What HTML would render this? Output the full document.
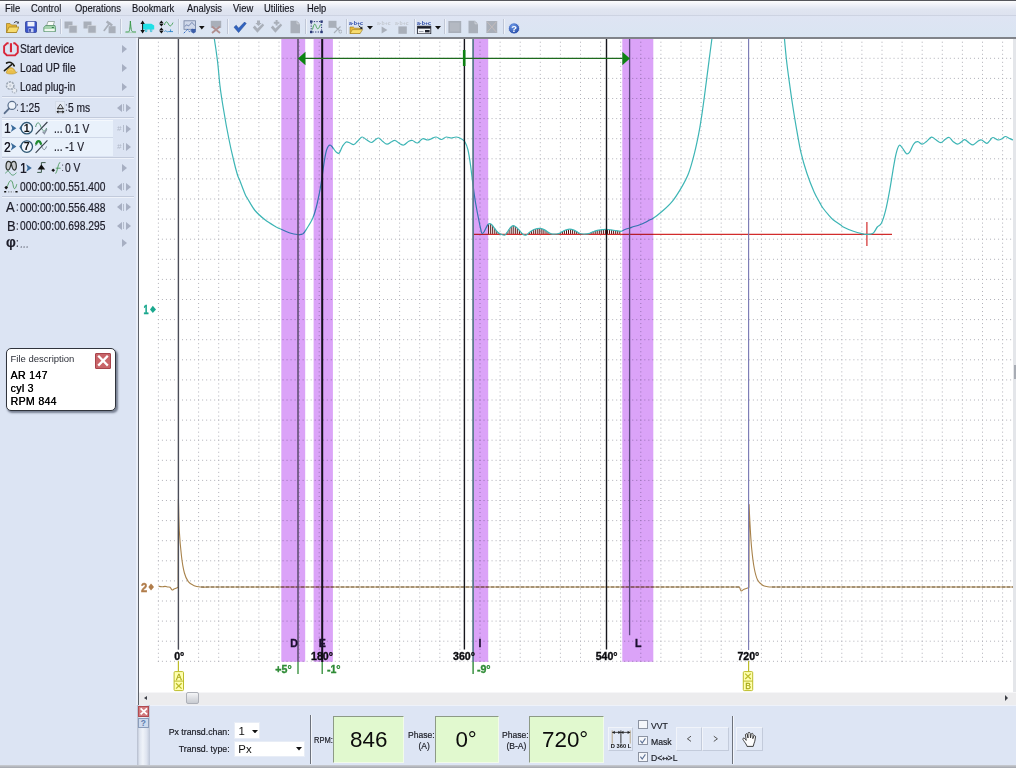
<!DOCTYPE html><html><head><meta charset="utf-8"><title>Oscilloscope</title><style>
*{box-sizing:border-box;margin:0;padding:0}
html,body{width:1016px;height:768px;overflow:hidden;background:#fff}
body{position:relative;font-family:"Liberation Sans",sans-serif;color:#1c1c28}
.abs{position:absolute}
#topline{left:0;top:0;width:1016px;height:1px;background:#55565c}
#menubar{left:0;top:1px;width:1016px;height:15px;background:linear-gradient(#fdfdfe 0%,#eef0f8 30%,#e0e5f1 60%,#dde2ef 100%);border-bottom:1px solid #cdd3e2}
#menubar span{position:absolute;top:1.2px;font-size:10.6px;line-height:12px;color:#14141c;white-space:nowrap;transform:scaleX(.885);transform-origin:0 50%;-webkit-text-stroke:.15px #14141c}
#toolbar{left:0;top:16px;width:1016px;height:21px;background:linear-gradient(#dee4f3,#dae5f2)}
#tbline{left:0;top:36.5px;width:1016px;height:.5px;background:#b9c0cc}
.tsep{position:absolute;top:19px;width:1px;height:15px;background:#c0c7d6;box-shadow:1px 0 0 #eef2f9}
.ico{position:absolute;top:20px}
#left{left:0;top:37px;width:138px;height:731px;background:#dce4f3}
#leftedge{left:136px;top:37px;width:2px;height:668px;background:#e9eef8}
#vline{left:137.6px;top:37px;width:1.5px;height:668px;background:#5c6068}
#hline{left:138px;top:37.2px;width:878px;height:1.6px;background:#808389}#hline2{left:0;top:37px;width:138px;height:1px;background:#b4b9c5}
.row{position:absolute;left:0;width:138px;height:0}
.nt{position:absolute;white-space:nowrap;font-size:12.4px;line-height:14px;transform:scaleX(.826);transform-origin:0 50%;color:#1c1c28;-webkit-text-stroke:.2px #1c1c28}
.lsep{position:absolute;left:2px;width:132px;height:1px;background:#c2cadb;box-shadow:0 1px 0 #eef2fa}
.tri{position:absolute;width:0;height:0;border-style:solid}
.tr{border-width:3.8px 0 3.8px 5px;border-color:transparent transparent transparent #aab2c4}
.tl{border-width:3.8px 5px 3.8px 0;border-color:transparent #aab2c4 transparent transparent}
#chbox{left:1.5px;top:119.5px;width:111px;height:36.5px;background:#e9f1fb;border-top:1px solid #f4f8fd}
#chdiv{left:1.5px;top:137px;width:111px;height:1px;background:#cfd8e8}
#fd{left:5.7px;top:347.8px;width:110.3px;height:63.4px;background:#fff;border:1px solid #30343c;border-radius:5px;box-shadow:1.5px 2px 2px rgba(40,50,70,.55)}
#fd .t{position:absolute;left:3.8px;top:4.4px;font-size:9.5px;line-height:11px;color:#2c2f38;white-space:nowrap}
#fd .b{position:absolute;left:3.8px;font-size:10.6px;line-height:12px;color:#000;white-space:nowrap;text-shadow:0.3px 0 0 #000;letter-spacing:.3px}
#fdx{position:absolute;left:88.6px;top:4.4px;width:16px;height:15.5px;background:#c96468;border:1px solid #a8444c;border-radius:1px}
#rstrip{left:1013px;top:38px;width:3px;height:654px;background:#e4e6ea}
#rthumb{left:1013.5px;top:365px;width:2.5px;height:14px;background:#a8acb4}
#scroll{left:139px;top:691.5px;width:877px;height:13.5px;background:#ececee;border-top:1px solid #f6f6f8}
#sthumb{left:186px;top:692.2px;width:12.8px;height:11.6px;background:linear-gradient(#f4f5f7,#d9dbe0 60%,#c9ccd2);border:1px solid #adb0b8;border-radius:2px}
#bottom{left:138px;top:705px;width:878px;height:60px;background:#dde5f4;border-top:1px solid #eef2fa}
#bstrip{left:137.4px;top:705px;width:12.4px;height:60px;background:linear-gradient(90deg,#b4bccd,#dfe5f0 20%,#eff3f9 45%,#dde3ef 75%,#bcc5d6)}
#botbar{left:0;top:765px;width:1016px;height:3px;background:linear-gradient(#c9ccd2,#a4a7ad)}
.bl{position:absolute;font-size:9.6px;line-height:11px;color:#1a1c24;white-space:nowrap;-webkit-text-stroke:.2px #1a1c24}
.combo{position:absolute;background:#fff;border:1px solid #e8edf6}
.gbox{position:absolute;top:715.5px;height:47px;background:#e1f9cf;border-top:1.5px solid #8d9a86;border-left:1.5px solid #8d9a86;border-right:1px solid #f2fbe9;border-bottom:1px solid #f2fbe9}
.big{position:absolute;font-size:22.4px;line-height:24px;color:#0c0c0c;white-space:nowrap;top:727.5px}
.btn{position:absolute;background:#e2e9f6;border:1px solid #f1f4fa;border-right-color:#c3cbdb;border-bottom-color:#c3cbdb;top:726.5px;height:24px}
.vsep{position:absolute;width:1px;background:#6d727c;box-shadow:1px 0 0 #f3f6fb}
.cb{position:absolute;left:638px;width:9.5px;height:9.5px;background:#f4f6fa;border:1px solid #8c93a2}
</style></head><body><div class="abs" id="topline"></div><div class="abs" id="menubar"><span style="left:5.0px">File</span><span style="left:31.0px">Control</span><span style="left:74.8px">Operations</span><span style="left:132.0px">Bookmark</span><span style="left:187.1px">Analysis</span><span style="left:232.5px">View</span><span style="left:264.1px">Utilities</span><span style="left:306.6px">Help</span></div><div class="abs" id="toolbar"></div><div class="tsep" style="left:60.0px"></div><div class="tsep" style="left:119.5px"></div><div class="tsep" style="left:177.5px"></div><div class="tsep" style="left:227.0px"></div><div class="tsep" style="left:304.8px"></div><div class="tsep" style="left:345.5px"></div><div class="tsep" style="left:413.8px"></div><div class="tsep" style="left:444.2px"></div><div class="tsep" style="left:502.8px"></div><svg class="ico" style="left:6.4px;top:20.0px" width="13" height="14" viewBox="0 0 13 14"><path d="M0.5 12.5V3.5H4L5.5 5H10.5V12.5Z" fill="#e8b83a" stroke="#9c7a1c" stroke-width=".7"/><path d="M0.5 12.5L3 7H13L10.5 12.5Z" fill="#f7dc6e" stroke="#9c7a1c" stroke-width=".7"/><path d="M8 3.2C9 1.2 11 1.2 12 2.5" stroke="#30343c" stroke-width=".9" fill="none"/><path d="M12.8 1.2V3.6H10.6Z" fill="#30343c"/></svg><svg class="ico" style="left:25.4px;top:20.0px" width="12" height="14" viewBox="0 0 12 14"><rect x=".5" y="1.5" width="11" height="11" rx="1" fill="#3a55c8" stroke="#22358f" stroke-width=".7"/><rect x="2.5" y="1.8" width="7" height="4.6" fill="#eef1fb"/><rect x="3.5" y="8.3" width="5" height="4" fill="#c9d2f2"/><rect x="4.2" y="9" width="1.6" height="2.8" fill="#263a9c"/></svg><svg class="ico" style="left:43.0px;top:20.0px" width="13" height="14" viewBox="0 0 13 14"><path d="M3.5 6L5 1.5H11.5L10 6Z" fill="#fafcf8" stroke="#7f9488" stroke-width=".7"/><path d="M.8 7.5L2.5 5.5H12L12.5 7.5V11.5H.8Z" fill="#a5d3ae" stroke="#4e8a62" stroke-width=".7"/><rect x="1.6" y="9" width="10" height="2.2" fill="#eef7ef"/><rect x="8.8" y="7" width="2" height="1" fill="#2f7d46"/></svg><svg class="ico" style="left:64.4px;top:20.0px" width="13.5" height="14" viewBox="0 0 13.5 14"><rect x=".5" y="1.5" width="8" height="7" fill="#a9afb9"/><rect x="5" y="5.5" width="8" height="7.5" fill="#a9afb9" stroke="#d7dbe2" stroke-width=".6"/></svg><svg class="ico" style="left:83.2px;top:20.0px" width="13.5" height="14" viewBox="0 0 13.5 14"><rect x=".5" y="1.5" width="8" height="7" fill="#a9afb9"/><rect x="5" y="5.5" width="8" height="7.5" fill="#a9afb9" stroke="#d7dbe2" stroke-width=".6"/></svg><svg class="ico" style="left:102.9px;top:20.0px" width="13" height="14" viewBox="0 0 13 14"><path d="M1.2 10.4L6.6 3.2" stroke="#a9afb9" stroke-width="1.7" stroke-linecap="round"/><path d="M3.6 1.6L9.2 5.6" stroke="#a9afb9" stroke-width="2.4"/><rect x="5.6" y="6.2" width="7" height="7" fill="#a9afb9"/></svg><svg class="ico" style="left:124.5px;top:20.0px" width="11.5" height="14" viewBox="0 0 11.5 14"><path d="M.5 12H3.2C4.6 12 5 9 5.4 1C5.9 9 6.4 12 8 12H11" stroke="#3a9a4a" stroke-width="1" fill="none"/><path d="M.5 12.6H11" stroke="#8fc89a" stroke-width=".6"/></svg><svg class="ico" style="left:140.4px;top:20.0px" width="14.5" height="14" viewBox="0 0 14.5 14"><path d="M2.6 3.8H11.4L14.2 5.6V9.4H2.6Z" fill="#1fe0e6"/><path d="M5.4 9.2V11.6H6.8V9.2M10.4 9.2V11.6H11.8V9.2" stroke="#27bcd4" stroke-width=".8" fill="none"/><path d="M2.6 1.5V12.5" stroke="#111" stroke-width="1"/><path d="M.4 4L2.6 .6L4.8 4ZM.4 10L2.6 13.4L4.8 10Z" fill="#111"/></svg><svg class="ico" style="left:159.2px;top:20.0px" width="14.5" height="14" viewBox="0 0 14.5 14"><path d="M.2 3.2L2.4 .4L4.6 3.2ZM.2 3.8L2.4 6.6L4.6 3.8ZM.2 10.2L2.4 7.4L4.6 10.2ZM.2 10.8L2.4 13.6L4.6 10.8Z" fill="#111"/><path d="M5.4 5C6.6 1 8 1 9.4 4S12.2 6.4 14 2.6" stroke="#3a9a4a" stroke-width=".9" fill="none"/><path d="M5.4 11.6C6.6 9.4 8 12.8 9.4 11.6H14M11.6 9.4V12" stroke="#2a86c8" stroke-width=".9" fill="none"/></svg><svg class="ico" style="left:182.6px;top:20.0px" width="13.5" height="14" viewBox="0 0 13.5 14"><rect x="1" y=".8" width="11.5" height="8.5" fill="#cfd8ea" stroke="#6f7f9e" stroke-width=".8"/><path d="M2 6.5C4 2.5 5 8 7 4.5S10 3.5 11.5 5.5" stroke="#5a6fa0" stroke-width=".8" fill="none"/><path d="M.8 13.2L4.5 9.4L6.5 11.8L9.6 9" stroke="#2e66c0" stroke-width="1" fill="none" stroke-dasharray="1.6 .8"/><path d="M8.2 9H12.8V12L10.5 13.4L8.2 12Z" fill="#3c5ea8"/></svg><svg class="ico" style="left:199.4px;top:25.8px" width="6" height="4" viewBox="0 0 6 4"><path d="M0 0H5.6L2.8 3.4Z" fill="#111"/></svg><svg class="ico" style="left:210.2px;top:20.0px" width="12" height="14" viewBox="0 0 12 14"><rect x=".8" y=".8" width="10.4" height="7" fill="#a9afb9"/><path d="M2 13L10 6.5M10 13L2 6.5" stroke="#b08f8f" stroke-width="1.8"/></svg><svg class="ico" style="left:233.0px;top:20.0px" width="13.5" height="14" viewBox="0 0 13.5 14"><path d="M1 7.2L3.2 5.2L5.6 8.2L11.6 2L13.2 3.6L5.6 12.6Z" fill="#2f62c0" stroke="#1e448c" stroke-width=".5"/></svg><svg class="ico" style="left:252.0px;top:20.0px" width="13" height="14" viewBox="0 0 13 14"><path d="M.8 7.4L2.8 5.6L5.4 8.6L10.6 3.6L12.2 5.2L5.4 12.8Z" fill="#a9afb9"/><path d="M5 .5H8V3H9.6L6.5 6L3.4 3H5Z" fill="#a9afb9"/></svg><svg class="ico" style="left:270.4px;top:20.0px" width="13" height="14" viewBox="0 0 13 14"><path d="M.8 7.4L2.8 5.6L5.4 8.6L10.6 3.6L12.2 5.2L5.4 12.8Z" fill="#a9afb9"/><path d="M5.6 0H7.6V1.8H9.4V3.8H7.6V5.6H5.6V3.8H3.8V1.8H5.6Z" fill="#a9afb9"/></svg><svg class="ico" style="left:289.6px;top:20.0px" width="10.5" height="14" viewBox="0 0 10.5 14"><path d="M.5 .8H7L10 3.8V13.2H.5Z" fill="#a9afb9"/><path d="M7 .8V3.8H10" fill="none" stroke="#d9dde4" stroke-width=".7"/></svg><svg class="ico" style="left:310.2px;top:20.0px" width="13" height="14" viewBox="0 0 13 14"><rect x="1.2" y="1.6" width="10.4" height="10.4" fill="none" stroke="#2c3a78" stroke-width="1" stroke-dasharray="1.3 1.3"/><path d="M2.5 9.5C4 3 5 3 6.2 6.5S8.5 9.5 10.5 4.5" stroke="#3a9a4a" stroke-width=".9" fill="none"/><rect x="0" y=".4" width="2.4" height="2.4" fill="#2c3a78"/><rect x="10.4" y=".4" width="2.4" height="2.4" fill="#2c3a78"/><rect x="0" y="10.8" width="2.4" height="2.4" fill="#2c3a78"/><rect x="10.4" y="10.8" width="2.4" height="2.4" fill="#2c3a78"/></svg><svg class="ico" style="left:328.0px;top:20.0px" width="14" height="14" viewBox="0 0 14 14"><rect x=".5" y=".8" width="8" height="7" fill="#a9afb9"/><path d="M6 13L12.5 6.5M7.5 7L12 11" stroke="#a9afb9" stroke-width="1.1" fill="none"/><circle cx="12.4" cy="11.6" r="1.5" fill="none" stroke="#a9afb9" stroke-width=".9"/></svg><svg class="ico" style="left:349.2px;top:20.0px" width="14.5" height="14" viewBox="0 0 14.5 14"><text x="0" y="4.6" font-size="5.2" font-weight="bold" font-family="Liberation Sans,sans-serif" fill="#2c4aa8" textLength="14" lengthAdjust="spacingAndGlyphs">a·b+c</text><path d="M1 13.6V7H4.4L5.6 8.2H11V13.6Z" fill="#e8b83a" stroke="#9c7a1c" stroke-width=".6"/><path d="M1 13.6L3.4 9.6H13.6L11 13.6Z" fill="#f7dc6e" stroke="#9c7a1c" stroke-width=".6"/><path d="M9.6 5.6L12.8 8.4" stroke="#222" stroke-width="1"/><path d="M13.6 9.2L10.8 8.8L13.2 6.4Z" fill="#222"/></svg><svg class="ico" style="left:367.2px;top:25.8px" width="6.4" height="4" viewBox="0 0 6.4 4"><path d="M0 0H6L3 3.6Z" fill="#111"/></svg><svg class="ico" style="left:376.8px;top:20.0px" width="14" height="14" viewBox="0 0 14 14"><text x="0" y="4.6" font-size="5.2" font-weight="bold" font-family="Liberation Sans,sans-serif" fill="#c3c8d0" textLength="13.6" lengthAdjust="spacingAndGlyphs">a·b+c</text><path d="M4.6 6.4V13.6L10.4 10Z" fill="#a9afb9"/></svg><svg class="ico" style="left:394.8px;top:20.0px" width="14" height="14" viewBox="0 0 14 14"><text x="0" y="4.6" font-size="5.2" font-weight="bold" font-family="Liberation Sans,sans-serif" fill="#c3c8d0" textLength="13.6" lengthAdjust="spacingAndGlyphs">a·b+c</text><rect x="3.4" y="6.4" width="8.4" height="7.4" fill="#a9afb9"/></svg><svg class="ico" style="left:417.0px;top:20.0px" width="14.5" height="14" viewBox="0 0 14.5 14"><text x="0" y="4.6" font-size="5.2" font-weight="bold" font-family="Liberation Sans,sans-serif" fill="#2c4aa8" textLength="14" lengthAdjust="spacingAndGlyphs">a·b+c</text><rect x=".6" y="6.2" width="13.2" height="7.6" fill="#f2f4f8" stroke="#1c1f2a" stroke-width=".8"/><rect x=".6" y="6.2" width="13.2" height="2.4" fill="#1c1f2a"/><rect x="8" y="10" width="4.6" height="2.4" fill="#1c1f2a"/><path d="M2 11.5H6.5" stroke="#8a8f9a" stroke-width=".8"/></svg><svg class="ico" style="left:435.2px;top:25.8px" width="6.4" height="4" viewBox="0 0 6.4 4"><path d="M0 0H6L3 3.6Z" fill="#111"/></svg><svg class="ico" style="left:448.0px;top:20.0px" width="13.5" height="14" viewBox="0 0 13.5 14"><rect x=".4" y="1" width="12.8" height="12" fill="#a9afb9"/><rect x="2" y="2.6" width="9.6" height="8.8" fill="#b4b9c2"/></svg><svg class="ico" style="left:468.0px;top:20.0px" width="10.5" height="14" viewBox="0 0 10.5 14"><path d="M.5 .8H7L10 3.8V13.2H.5Z" fill="#a9afb9"/><path d="M7 .8V3.8H10" fill="none" stroke="#d9dde4" stroke-width=".7"/></svg><svg class="ico" style="left:486.4px;top:20.0px" width="11.5" height="14" viewBox="0 0 11.5 14"><rect x=".4" y="1" width="10.8" height="12" fill="#a9afb9"/><path d="M1 1.6L10.6 12.4M10.6 1.6L1 12.4" stroke="#c4bcbc" stroke-width="1"/></svg><svg class="ico" style="left:508.0px;top:21.5px" width="12.5" height="13" viewBox="0 0 12.5 13"><defs><radialGradient id="hg" cx=".4" cy=".3" r=".8"><stop offset="0" stop-color="#6f9be8"/><stop offset="1" stop-color="#1a3f9e"/></radialGradient></defs><circle cx="6" cy="6.4" r="5.6" fill="url(#hg)" stroke="#e9eefa" stroke-width=".8"/><text x="6" y="9.8" font-size="9.4" font-weight="bold" font-family="Liberation Sans,sans-serif" fill="#fff" text-anchor="middle">?</text></svg><div class="abs" id="tbline"></div><div class="abs" id="left"></div><div class="abs" id="leftedge"></div><div class="nt" style="left:19.8px;top:42.3px;">Start device</div><svg class="abs" style="left:122.2px;top:45.2px" width="5" height="8" viewBox="0 0 5 8"><path d="M0 0L5 4L0 8Z" fill="#a7afc2"/></svg><div class="nt" style="left:19.8px;top:61.2px;">Load UP file</div><svg class="abs" style="left:122.2px;top:64.0px" width="5" height="8" viewBox="0 0 5 8"><path d="M0 0L5 4L0 8Z" fill="#a7afc2"/></svg><div class="nt" style="left:19.8px;top:79.9px;transform:scaleX(.81)">Load plug-in</div><svg class="abs" style="left:122.2px;top:82.7px" width="5" height="8" viewBox="0 0 5 8"><path d="M0 0L5 4L0 8Z" fill="#a7afc2"/></svg><div class="lsep" style="top:96px"></div><div class="nt" style="left:19.8px;top:100.9px;">1:25</div><div class="nt" style="left:68.0px;top:100.9px;">5 ms</div><svg class="abs" style="left:116.5px;top:103.7px" width="5" height="8" viewBox="0 0 5 8"><path d="M5 0L0 4L5 8Z" fill="#a7afc2"/></svg><div class="abs" style="left:123px;top:104.2px;width:1px;height:7px;background:#b4bccc"></div><svg class="abs" style="left:126.0px;top:103.7px" width="5" height="8" viewBox="0 0 5 8"><path d="M0 0L5 4L0 8Z" fill="#a7afc2"/></svg><div class="lsep" style="top:117.2px"></div><div class="abs" id="chbox"></div><div class="abs" id="chdiv"></div><div class="nt" style="left:4.0px;top:121.4px;font-size:14.4px;line-height:16px;margin-top:-1px;text-shadow:.35px 0 0 #1c1c28">1</div><div class="nt" style="left:53.5px;top:121.8px;">... 0.1 V</div><div class="abs" style="left:117px;top:124.5px;font-size:8px;line-height:8px;color:#b0b8c8;font-style:italic">#</div><div class="abs" style="left:123px;top:125.0px;width:1px;height:7px;background:#b4bccc"></div><svg class="abs" style="left:126.0px;top:124.5px" width="5" height="8" viewBox="0 0 5 8"><path d="M0 0L5 4L0 8Z" fill="#a7afc2"/></svg><div class="nt" style="left:4.0px;top:139.6px;font-size:14.4px;line-height:16px;margin-top:-1px;text-shadow:.35px 0 0 #1c1c28">2</div><div class="nt" style="left:53.5px;top:140.0px;">... -1 V</div><div class="abs" style="left:117px;top:142.5px;font-size:8px;line-height:8px;color:#b0b8c8;font-style:italic">#</div><div class="abs" style="left:123px;top:143.0px;width:1px;height:7px;background:#b4bccc"></div><svg class="abs" style="left:126.0px;top:142.5px" width="5" height="8" viewBox="0 0 5 8"><path d="M0 0L5 4L0 8Z" fill="#a7afc2"/></svg><div class="lsep" style="top:157.4px"></div><div class="nt" style="left:19.5px;top:161.0px;font-size:14.4px;line-height:16px;margin-top:-1px;text-shadow:.35px 0 0 #1c1c28">1</div><div class="nt" style="left:65.0px;top:161.2px;">0 V</div><svg class="abs" style="left:122.2px;top:163.8px" width="5" height="8" viewBox="0 0 5 8"><path d="M0 0L5 4L0 8Z" fill="#a7afc2"/></svg><div class="nt" style="left:20.0px;top:179.8px;">000:00:00.551.400</div><svg class="abs" style="left:116.5px;top:182.5px" width="5" height="8" viewBox="0 0 5 8"><path d="M5 0L0 4L5 8Z" fill="#a7afc2"/></svg><div class="abs" style="left:123px;top:183.0px;width:1px;height:7px;background:#b4bccc"></div><svg class="abs" style="left:126.0px;top:182.5px" width="5" height="8" viewBox="0 0 5 8"><path d="M0 0L5 4L0 8Z" fill="#a7afc2"/></svg><div class="lsep" style="top:195.8px"></div><div class="nt" style="left:5.5px;top:200.2px;font-size:14.4px;line-height:16px;margin-top:-1px;transform:scaleX(.9)">A</div><div class="nt" style="left:15.6px;top:200.3px;color:#556">:</div><div class="nt" style="left:20.0px;top:200.6px;">000:00:00.556.488</div><svg class="abs" style="left:116.5px;top:203.3px" width="5" height="8" viewBox="0 0 5 8"><path d="M5 0L0 4L5 8Z" fill="#a7afc2"/></svg><div class="abs" style="left:123px;top:203.8px;width:1px;height:7px;background:#b4bccc"></div><svg class="abs" style="left:126.0px;top:203.3px" width="5" height="8" viewBox="0 0 5 8"><path d="M0 0L5 4L0 8Z" fill="#a7afc2"/></svg><div class="nt" style="left:6.5px;top:218.6px;font-size:14.4px;line-height:16px;margin-top:-1px;transform:scaleX(.9)">B</div><div class="nt" style="left:15.6px;top:218.7px;color:#556">:</div><div class="nt" style="left:20.0px;top:219.0px;">000:00:00.698.295</div><svg class="abs" style="left:116.5px;top:221.7px" width="5" height="8" viewBox="0 0 5 8"><path d="M5 0L0 4L5 8Z" fill="#a7afc2"/></svg><div class="abs" style="left:123px;top:222.2px;width:1px;height:7px;background:#b4bccc"></div><svg class="abs" style="left:126.0px;top:221.7px" width="5" height="8" viewBox="0 0 5 8"><path d="M0 0L5 4L0 8Z" fill="#a7afc2"/></svg><div class="nt" style="left:6.0px;top:235.4px;font-size:14.4px;line-height:16px;margin-top:-1px;font-weight:bold;transform:scaleX(.95)">φ</div><div class="nt" style="left:15.6px;top:236.3px;color:#556">:</div><div class="nt" style="left:20.0px;top:237.0px;color:#b4bccb">...</div><svg class="abs" style="left:122.2px;top:239.1px" width="5" height="8" viewBox="0 0 5 8"><path d="M0 0L5 4L0 8Z" fill="#a7afc2"/></svg><svg class="abs" style="left:0;top:37px" width="138" height="230" viewBox="0 37 138 230"><path d="M8.6 43.3H6.9L4.1 46.1V52.5L6.9 55.4H15L17.8 52.5V46.1L15 43.3H13.3" fill="none" stroke="#d9263a" stroke-width="1.9" stroke-linejoin="round"/><path d="M10.95 43.2V52.2" stroke="#d9263a" stroke-width="2.1"/><path d="M6.2 73C6.6 70.2 8.6 67.6 10.9 67.6C13.1 67.6 15 70 15.8 72.5C16.4 72.4 16.9 72.2 17.3 72C15 74.6 8.8 74.6 6.2 73Z" fill="#e9bf4c" stroke="#b08a24" stroke-width=".5"/><path d="M8.4 70.6C9.4 69.4 11.4 69.2 12.8 70.2" stroke="#f6dc86" stroke-width=".8" fill="none"/><path d="M4.4 70.7L11.6 64.7" stroke="#1a1a14" stroke-width="1.5" stroke-linecap="round"/><path d="M6.6 63C9.2 61.4 12.6 62.4 14.2 65.8" stroke="#1a1a14" stroke-width="1.7" fill="none" stroke-linecap="round"/><circle cx="10.2" cy="85.6" r="3.7" fill="#e9edf4" stroke="#9ea8b6" stroke-width="1.6" stroke-dasharray="2.2 .9"/><circle cx="10.2" cy="85.6" r="1.3" fill="#c9d0da"/><circle cx="14.4" cy="90.6" r="2.3" fill="#e9edf4" stroke="#aeb6c3" stroke-width="1.2" stroke-dasharray="1.5 .8"/><circle cx="12" cy="105.4" r="4" fill="#eef3fa" stroke="#5a6f8c" stroke-width="1.2"/><path d="M9 108.6L4.6 113.2" stroke="#5a6f8c" stroke-width="1.9" stroke-linecap="round"/><path d="M17.5 104.4V105.4M17.5 109.8V110.8" stroke="#445" stroke-width="1"/><rect x="55.8" y="101.6" width="9" height="12" fill="#e4eaf5" stroke="#c8d0de" stroke-width=".5"/><path d="M57.6 108.4L60.4 104.2L63.2 108.4Z" fill="none" stroke="#333" stroke-width=".9"/><path d="M57 108.8H63.8" stroke="#333" stroke-width=".9"/><path d="M57.4 111.8H63.4" stroke="#111" stroke-width=".9"/><path d="M56.4 111.8L58.4 110.2V113.4ZM64.4 111.8L62.4 110.2V113.4Z" fill="#111"/><path d="M66.4 104.4V105.4M66.4 109.8V110.8" stroke="#445" stroke-width="1"/><path d="M10.8 124.4L12.2 128.2L10.8 132.0L16.4 128.2Z" fill="#3b6c9c"/><path d="M19.2 128.2L21.2 125.8L23 128.2L21.2 130.6Z" fill="#3b6c9c"/><circle cx="26.8" cy="128.2" r="5.7" fill="#f1f6fc" stroke="#2f5874" stroke-width="1.3"/><text x="26.8" y="132.0" font-size="10.6" font-weight="bold" font-family="Liberation Sans,sans-serif" fill="#111" text-anchor="middle">1</text><path d="M10.8 142.8L12.2 146.6L10.8 150.4L16.4 146.6Z" fill="#3b6c9c"/><path d="M19.2 146.6L21.2 144.2L23 146.6L21.2 149.0Z" fill="#3b6c9c"/><circle cx="26.8" cy="146.6" r="5.7" fill="#f1f6fc" stroke="#2f5874" stroke-width="1.3"/><text x="26.8" y="150.4" font-size="10.6" font-weight="bold" font-family="Liberation Sans,sans-serif" fill="#111" text-anchor="middle">7</text><path d="M35.6 127C36.8 121.6 39 121.6 40.6 126S44.4 134 46.6 128" stroke="#5a9a78" stroke-width="1" fill="none"/><path d="M35.6 134.4L47.4 122" stroke="#39404c" stroke-width="1.1"/><path d="M42.6 131.6L44.4 133.6L46.8 129.2" stroke="#8a93a4" stroke-width="1.4" fill="none"/><path d="M35.6 146C36.8 140.2 39.4 140.2 41 144.6S44.4 152.4 46.6 146.4" stroke="#7d8a96" stroke-width="1" fill="none"/><path d="M36 144.6C37 140 40 140 41.2 144.6" stroke="#1f8a2f" stroke-width="2.2" fill="none"/><path d="M35.6 152.8L47.4 140.4" stroke="#39404c" stroke-width="1.1"/><path d="M8.6 161.4C5.4 161.4 5.2 170.2 8 170.2C10 170.2 10.6 166 11.2 163.4C11.8 166 12.4 170.2 14.4 170.2C17.2 170.2 17 161.4 13.8 161.4C12.6 161.4 11.8 162.2 11.2 163.4C10.6 162.2 9.8 161.4 8.6 161.4Z" fill="#c9ccd0" stroke="#2c302c" stroke-width="1.2" stroke-linejoin="round"/><path d="M5.6 173.4C7 170.4 8.6 170.6 10 173S13.6 176.4 16.4 172.6" stroke="#4c9a6a" stroke-width=".9" fill="none"/><path d="M26.2 164.2L27.6 168L26.2 171.8L31.8 168Z" fill="#3b6c9c"/><path d="M37.2 172.4H41.4V162.6H45.6" stroke="#2a4a38" stroke-width=".9" fill="none"/><path d="M37.6 169.6L41.4 164.6L45.2 169.6Z" fill="#111"/><path d="M55.6 173.6C57.6 171.6 57.6 164.2 60 162.2M55.8 168.2H60.6" stroke="#4c9a5c" stroke-width=".9" fill="none"/><path d="M51.4 170.2L53.2 168.4L55 170.2L53.2 172Z" fill="#111"/><path d="M62.6 164.6V165.6M62.6 170V171" stroke="#445" stroke-width="1"/><path d="M6 188.4C7.8 187 8.6 180.6 10.9 180.6S13 188.6 14.4 188.6C15.6 188.6 16.2 186.4 16.8 184.2" stroke="#4c9a5c" stroke-width=".9" fill="none"/><path d="M4.2 191.8H6.2M15.4 191.8H17.6" stroke="#111" stroke-width="1.5"/><path d="M8 191.8H13.6" stroke="#8a8f98" stroke-width="1.2" stroke-dasharray="1.4 1.2"/><path d="M4.4 187.6L6.2 185.8L8 187.6L6.2 189.4Z" fill="#111"/></svg><div class="abs" id="fd"><div class="t">File description</div><div id="fdx"><svg width="14" height="13.5" viewBox="0 0 14 13.5" style="position:absolute;left:0;top:0"><path d="M3 2.6L11 10.8M11 2.6L3 10.8" stroke="#fff" stroke-width="2.3" stroke-linecap="square"/></svg></div><div class="b" style="top:20.4px">AR 147</div><div class="b" style="top:33.5px">cyl 3</div><div class="b" style="top:45.9px">RPM 844</div></div><div class="abs" id="rstrip"></div><div class="abs" id="rthumb"></div><svg class="abs" style="left:0;top:0" width="1016" height="768" viewBox="0 0 1016 768"><defs><clipPath id="cc"><rect x="139" y="38" width="874" height="653"/></clipPath></defs><g clip-path="url(#cc)"><path d="M158.4 37.7V661.8M178.5 37.7V661.8M198.6 37.7V661.8M218.7 37.7V661.8M238.8 37.7V661.8M258.9 37.7V661.8M279.0 37.7V661.8M299.1 37.7V661.8M319.2 37.7V661.8M339.3 37.7V661.8M359.4 37.7V661.8M379.5 37.7V661.8M399.6 37.7V661.8M419.7 37.7V661.8M439.8 37.7V661.8M459.9 37.7V661.8M480.0 37.7V661.8M500.1 37.7V661.8M520.2 37.7V661.8M540.3 37.7V661.8M560.4 37.7V661.8M580.5 37.7V661.8M600.6 37.7V661.8M620.7 37.7V661.8M640.8 37.7V661.8M660.9 37.7V661.8M681.0 37.7V661.8M701.1 37.7V661.8M721.2 37.7V661.8M741.3 37.7V661.8M761.4 37.7V661.8M781.5 37.7V661.8M801.6 37.7V661.8M821.7 37.7V661.8M841.8 37.7V661.8M861.9 37.7V661.8M882.0 37.7V661.8M902.1 37.7V661.8M922.2 37.7V661.8M942.3 37.7V661.8M962.4 37.7V661.8M982.5 37.7V661.8M1002.6 37.7V661.8" stroke="#b0b0b8" stroke-width="1" stroke-dasharray="1 3.02" fill="none"/>
<path d="M157.9 58.3H1013M157.9 78.4H1013M157.9 98.5H1013M157.9 118.6H1013M157.9 138.7H1013M157.9 158.8H1013M157.9 178.9H1013M157.9 199.0H1013M157.9 219.1H1013M157.9 239.2H1013M157.9 259.3H1013M157.9 279.4H1013M157.9 299.5H1013M157.9 319.6H1013M157.9 339.7H1013M157.9 359.8H1013M157.9 379.9H1013M157.9 400.0H1013M157.9 420.1H1013M157.9 440.2H1013M157.9 460.3H1013M157.9 480.4H1013M157.9 500.5H1013M157.9 520.6H1013M157.9 540.7H1013M157.9 560.8H1013M157.9 580.9H1013M157.9 601.0H1013M157.9 621.1H1013M157.9 641.2H1013M157.9 661.3H1013" stroke="#b0b0b8" stroke-width="1" stroke-dasharray="1 3.02" fill="none"/>
<path d="M158.6 586.3C159.2 586.4 160.9 586.8 162.0 586.8C163.1 586.8 164.0 586.4 165.0 586.4C166.0 586.4 167.2 586.9 168.0 587.0C168.8 587.1 169.3 586.8 170.0 587.3C170.7 587.8 171.5 589.7 172.2 590.0C172.9 590.3 173.2 589.4 174.0 589.0C174.8 588.6 176.5 588.1 177.2 587.8C177.9 587.5 178.0 587.1 178.2 587.0L178.4 499.5C178.6 504.7 178.8 521.3 179.3 530.8C179.8 540.2 180.7 549.2 181.5 556.2C182.3 563.2 183.3 568.8 184.4 573.0C185.5 577.2 186.7 579.5 188.3 581.6C189.9 583.7 192.1 584.9 194.2 585.8C196.3 586.7 198.4 586.8 201.0 587.0C203.6 587.2 208.5 587.0 210.0 587.0L739.5 587L739.5 587.0C739.8 587.6 740.4 590.5 741.1 590.9C741.9 591.3 742.8 589.7 744.0 589.2C745.2 588.7 747.5 588.2 748.3 587.8C749.1 587.4 748.8 587.1 748.9 587.0L749.1 504.6C749.2 507.8 749.6 516.8 750.0 524.0C750.4 531.2 750.9 540.4 751.6 547.7C752.3 555.0 753.2 562.6 754.2 568.0C755.2 573.4 756.2 577.1 757.6 580.0C759.0 582.9 760.9 584.2 762.6 585.3C764.3 586.4 766.1 586.4 767.7 586.7C769.3 587.0 771.3 587.0 772.0 587.0L1013 587" stroke="#a8824a" stroke-width="1.1" fill="none" stroke-linejoin="round"/>
<path d="M201 587H739M772 587H1013" stroke="#5a4528" stroke-width="1" stroke-dasharray="3 2" fill="none" opacity="0.75"/>
<path d="M488.6 224.2V234.4M490.7 224.1V234.4M492.7 225.9V234.4M494.8 228.7V234.4M496.8 231.1V234.4M498.9 233.0V234.4M507.1 232.4V234.4M509.1 229.5V234.4M511.2 227.0V234.4M513.2 225.6V234.4M515.3 226.6V234.4M517.3 228.3V234.4M519.4 230.4V234.4M521.4 232.8V234.4M529.6 232.3V234.4M531.6 231.0V234.4M533.7 229.7V234.4M535.7 229.1V234.4M537.8 228.7V234.4M539.8 228.3V234.4M541.9 228.9V234.4M543.9 229.6V234.4M546.0 230.9V234.4M548.0 232.1V234.4M560.3 232.9V234.4M562.4 231.6V234.4M564.4 230.6V234.4M566.5 230.0V234.4M568.5 229.5V234.4M570.6 229.4V234.4M572.6 229.8V234.4M574.7 230.5V234.4M576.7 231.7V234.4M578.8 232.9V234.4M591.1 232.7V234.4M593.1 231.7V234.4M595.2 231.0V234.4M597.2 230.5V234.4M599.3 230.0V234.4M601.3 229.7V234.4M603.4 229.6V234.4M605.4 229.4V234.4M607.5 229.5V234.4M609.5 229.8V234.4M611.6 230.0V234.4M613.6 230.3V234.4M615.7 230.6V234.4M617.7 230.8V234.4M619.8 231.1V234.4" stroke="#521010" stroke-width="1" fill="none"/>
<path d="M473 234.4H892M866.9 222V246" stroke="#d22c2c" stroke-width="1.2" fill="none"/>
<path d="M214.2 38.0C214.8 41.8 216.5 53.0 217.5 61.0C218.5 69.0 219.0 77.7 220.0 86.0C221.0 94.3 222.3 102.2 223.8 111.0C225.2 119.8 227.1 130.2 228.8 138.5C230.4 146.8 232.3 154.9 233.8 161.0C235.2 167.1 236.5 171.7 237.5 175.0C238.5 178.3 238.8 177.8 240.0 181.0C241.2 184.2 243.8 191.1 245.0 194.0C246.2 196.9 245.8 195.8 247.5 198.5C249.2 201.2 252.1 207.0 255.0 210.5C257.9 214.0 261.5 217.0 265.0 219.8C268.5 222.5 273.8 225.5 276.2 227.0C278.8 228.5 277.7 227.8 280.0 228.8C282.3 229.8 287.1 232.0 290.0 233.0C292.9 234.0 295.3 234.4 297.5 234.5C299.7 234.6 301.3 234.9 303.0 233.8C304.7 232.6 305.9 230.0 307.5 227.5C309.1 225.0 311.0 222.1 312.5 218.8C314.0 215.4 315.1 211.9 316.2 207.5C317.4 203.1 318.5 197.5 319.5 192.5C320.5 187.5 321.2 182.9 322.0 177.5C322.8 172.1 323.7 164.8 324.5 160.0C325.3 155.2 326.1 151.2 327.0 148.8C327.9 146.2 329.0 145.1 330.0 145.0C331.0 144.9 332.0 146.8 333.0 148.0C334.0 149.2 335.2 151.2 336.2 152.0C337.3 152.8 338.2 154.0 339.2 153.0C340.3 152.0 341.3 148.1 342.5 146.2C343.7 144.4 345.0 142.5 346.2 142.0C347.5 141.5 348.8 142.6 350.0 143.0C351.2 143.4 352.5 144.8 353.8 144.5C355.0 144.2 356.1 142.5 357.5 141.2C358.9 140.0 360.5 137.3 362.0 137.0C363.5 136.7 364.7 138.6 366.2 139.5C367.8 140.4 369.8 142.4 371.2 142.5C372.7 142.6 373.8 140.8 375.0 140.0C376.2 139.2 377.5 137.8 378.8 138.0C380.0 138.2 381.1 140.2 382.5 141.2C383.9 142.3 385.5 144.1 387.0 144.2C388.5 144.4 389.9 142.6 391.2 142.0C392.6 141.4 393.5 140.2 395.0 140.5C396.5 140.8 398.5 143.0 400.0 143.8C401.5 144.5 402.3 145.4 403.8 145.0C405.2 144.6 407.3 142.0 408.8 141.2C410.2 140.5 411.0 140.2 412.5 140.5C414.0 140.8 415.8 143.3 417.5 143.0C419.2 142.7 420.8 139.2 422.5 138.8C424.2 138.2 426.0 140.0 427.5 140.0C429.0 140.0 429.8 139.2 431.2 138.8C432.7 138.2 434.6 136.9 436.2 137.0C437.9 137.1 439.6 139.5 441.2 139.5C442.9 139.5 444.6 137.2 446.2 137.0C447.9 136.8 449.6 138.0 451.2 138.0C452.9 138.0 454.6 136.9 456.2 137.0C457.9 137.1 459.8 137.9 461.2 138.8C462.7 139.6 463.9 140.1 465.0 142.0C466.1 143.9 467.1 146.2 468.0 150.0C468.9 153.8 469.7 159.2 470.5 165.0C471.3 170.8 472.2 178.8 473.0 185.0C473.8 191.2 474.5 196.7 475.5 202.5C476.5 208.3 477.8 215.2 478.8 220.0C479.7 224.8 480.7 229.0 481.2 231.2C481.8 233.5 481.7 233.4 482.2 233.5C482.7 233.6 483.4 232.9 484.0 232.0C484.6 231.1 485.3 229.2 486.0 228.0C486.7 226.8 487.3 225.2 488.0 224.5C488.7 223.8 489.3 223.5 490.0 223.6C490.7 223.7 491.2 224.1 492.0 225.0C492.8 225.9 494.0 227.8 495.0 229.0C496.0 230.2 496.9 231.6 498.0 232.5C499.1 233.4 500.3 234.0 501.4 234.4C502.4 234.8 503.5 235.3 504.3 235.2C505.1 235.1 505.4 234.7 506.0 234.0C506.6 233.3 507.2 232.1 508.0 231.0C508.8 229.9 509.6 228.4 510.5 227.5C511.4 226.6 512.3 225.7 513.2 225.6C514.1 225.5 515.0 226.3 516.0 227.0C517.0 227.7 518.0 228.9 519.0 230.0C520.0 231.1 521.0 232.6 522.0 233.5C523.0 234.4 524.2 235.0 525.0 235.2C525.8 235.4 526.2 235.0 527.0 234.5C527.8 234.0 528.8 232.8 530.0 232.0C531.2 231.2 532.4 230.1 534.0 229.5C535.6 228.9 538.1 228.3 539.8 228.3C541.5 228.3 542.7 229.0 544.0 229.6C545.3 230.2 546.4 231.1 547.5 231.8C548.6 232.5 549.6 233.2 550.5 233.6C551.4 234.0 552.0 234.0 553.0 234.1C554.0 234.2 555.4 234.1 556.5 234.0C557.6 233.9 558.6 233.8 559.5 233.4C560.4 233.0 561.1 232.3 562.0 231.8C562.9 231.3 563.7 230.7 565.0 230.3C566.3 229.9 568.3 229.2 569.8 229.2C571.3 229.2 572.8 229.7 574.0 230.1C575.2 230.5 576.1 231.3 577.0 231.8C577.9 232.3 578.5 232.9 579.5 233.3C580.5 233.7 581.8 233.9 583.0 234.0C584.2 234.1 585.8 234.0 587.0 233.9C588.2 233.8 589.0 233.5 590.0 233.2C591.0 232.8 591.9 232.2 593.0 231.8C594.1 231.4 595.2 230.9 596.5 230.6C597.8 230.3 598.9 230.0 600.5 229.8C602.1 229.6 604.2 229.4 606.0 229.4C607.8 229.4 609.3 229.7 611.0 229.9C612.7 230.1 614.4 230.4 616.0 230.6C617.6 230.8 619.4 231.5 620.9 231.3C622.4 231.1 623.5 230.1 625.0 229.5C626.5 228.9 628.2 228.5 629.7 228.0C631.2 227.5 632.4 227.0 634.0 226.5C635.6 226.0 637.4 225.7 639.2 225.0C641.0 224.3 643.2 223.4 645.0 222.5C646.8 221.6 648.6 220.4 650.0 219.7C651.4 219.0 651.1 219.8 653.2 218.3C655.3 216.9 659.2 213.9 662.5 211.0C665.8 208.1 669.6 204.7 672.7 200.8C675.9 196.9 678.7 192.2 681.4 187.6C684.1 183.0 686.5 178.8 688.7 173.0C690.9 167.2 692.9 159.5 694.6 152.7C696.3 145.9 697.6 139.5 699.0 132.2C700.4 124.9 701.5 117.2 702.7 108.9C703.9 100.7 705.1 91.0 706.2 82.7C707.3 74.4 708.2 66.8 709.2 59.3C710.2 51.8 711.5 41.5 712.0 38.0M784.4 38.0C784.7 41.5 785.6 51.8 786.4 59.3C787.2 66.8 788.4 75.4 789.4 82.7C790.4 90.0 791.1 95.2 792.3 103.0C793.5 110.8 795.1 121.0 796.6 129.3C798.1 137.6 799.3 145.4 801.0 152.7C802.7 160.0 804.6 166.4 806.8 173.0C809.0 179.6 811.9 187.0 814.1 192.0C816.3 197.0 818.5 200.4 820.0 203.1C821.5 205.8 821.5 206.1 822.9 208.0C824.3 209.9 826.6 212.7 828.3 214.6C830.0 216.5 831.0 218.0 833.1 219.7C835.2 221.4 839.1 223.8 840.8 225.0C842.5 226.2 841.2 225.9 843.3 227.0C845.4 228.1 850.0 230.1 853.4 231.3C856.8 232.5 861.5 233.5 863.7 234.0C866.0 234.5 865.3 234.5 866.9 234.4C868.5 234.3 871.4 234.5 873.1 233.3C874.8 232.1 875.9 228.7 877.3 227.0C878.7 225.3 880.1 225.7 881.5 222.9C882.9 220.1 884.2 216.0 885.6 210.4C887.0 204.8 888.6 196.2 889.8 189.6C891.0 183.0 891.9 176.7 892.9 170.8C893.9 164.9 895.0 158.4 896.0 154.2C897.0 150.0 898.2 146.4 899.2 145.4C900.2 144.4 901.1 146.5 902.3 147.9C903.5 149.3 905.3 153.1 906.5 153.8C907.7 154.4 908.4 153.8 909.6 152.1C910.8 150.4 912.4 145.5 913.8 143.8C915.1 142.0 916.5 141.6 917.9 141.7C919.3 141.8 920.7 144.2 922.1 144.2C923.5 144.2 924.7 142.9 926.2 141.7C927.8 140.5 929.9 137.4 931.5 137.1C933.1 136.8 934.1 138.7 935.6 139.6C937.1 140.5 939.2 142.7 940.8 142.7C942.4 142.7 943.6 140.5 945.0 139.6C946.4 138.7 947.8 137.2 949.2 137.5C950.6 137.8 951.9 140.6 953.3 141.7C954.7 142.8 956.1 144.2 957.5 144.2C958.9 144.2 960.5 142.5 961.7 141.7C962.9 140.9 963.6 139.4 964.8 139.6C966.0 139.8 967.5 141.8 968.9 142.7C970.3 143.6 971.7 145.0 973.1 144.8C974.5 144.6 975.9 142.5 977.3 141.7C978.7 140.9 979.9 139.7 981.5 140.0C983.1 140.3 985.3 143.2 986.7 143.3C988.1 143.4 988.8 141.6 989.8 140.6C990.8 139.6 991.5 137.6 992.9 137.5C994.3 137.4 996.5 139.8 998.1 140.0C999.7 140.2 1001.1 139.1 1002.3 138.5C1003.5 137.9 1004.2 136.5 1005.4 136.5C1006.6 136.5 1008.3 137.9 1009.6 138.5C1010.9 139.1 1012.4 139.8 1013.0 140.0" stroke="#3db5b5" stroke-width="1.2" fill="none" stroke-linejoin="round"/></g><path d="M178.4 38V649.5" stroke="#4a4c58" stroke-width="1.4"/><path d="M178.4 661V672" stroke="#bdbd2a" stroke-width="1.2"/><path d="M298 38V662" stroke="#687470" stroke-width="1.5"/><path d="M298 662V674" stroke="#2e8b35" stroke-width="1.3"/><path d="M322.2 38V662" stroke="#16161c" stroke-width="2"/><path d="M322.2 662V674" stroke="#2e8b35" stroke-width="1.3"/><path d="M464.4 38V649.5" stroke="#16161c" stroke-width="1.4"/><path d="M473.1 38V662" stroke="#5d7c8e" stroke-width="1.8"/><path d="M473.1 662V674" stroke="#2e8b35" stroke-width="1.4"/><path d="M606.5 38V649.5" stroke="#16161c" stroke-width="1.4"/><path d="M629.6 38V635.3" stroke="#6a6f80" stroke-width="1.3"/><path d="M748.6 38V650" stroke="#7a7ab6" stroke-width="1.15"/><path d="M748.6 661V672" stroke="#bdbd2a" stroke-width="1.2"/><g style="mix-blend-mode:multiply" fill="#dba3f8"><rect x="281.3" y="38" width="23.9" height="623.8"/><rect x="313.6" y="38" width="19.3" height="623.8"/><rect x="474" y="38" width="14.2" height="623.8"/><rect x="622.3" y="38" width="31" height="623.8"/></g><path d="M305 58.4H622.5" stroke="#1c6a1c" stroke-width="1.2"/><path d="M297.9 58.4L305.5 51.7V65.2Z" fill="#0d8212"/><path d="M629.9 58.4L622.3 51.7V65.2Z" fill="#0d8212"/><path d="M464.2 50V66" stroke="#0d8212" stroke-width="2.6"/><text x="179.2" y="660.0" font-size="10.6" font-weight="bold" font-family="Liberation Sans,sans-serif" fill="#0c0c10" stroke="#0c0c10" stroke-width=".35" text-anchor="middle">0°</text><text x="322.0" y="660.0" font-size="10.6" font-weight="bold" font-family="Liberation Sans,sans-serif" fill="#0c0c10" stroke="#0c0c10" stroke-width=".35" text-anchor="middle">180°</text><text x="464.0" y="660.0" font-size="10.6" font-weight="bold" font-family="Liberation Sans,sans-serif" fill="#0c0c10" stroke="#0c0c10" stroke-width=".35" text-anchor="middle">360°</text><text x="606.6" y="660.0" font-size="10.6" font-weight="bold" font-family="Liberation Sans,sans-serif" fill="#0c0c10" stroke="#0c0c10" stroke-width=".35" text-anchor="middle">540°</text><text x="748.4" y="660.0" font-size="10.6" font-weight="bold" font-family="Liberation Sans,sans-serif" fill="#0c0c10" stroke="#0c0c10" stroke-width=".35" text-anchor="middle">720°</text><text x="294.0" y="647.2" font-size="10.6" font-weight="bold" font-family="Liberation Sans,sans-serif" fill="#1c1030" stroke="#1c1030" stroke-width=".35" text-anchor="middle">D</text><text x="322.2" y="647.2" font-size="10.6" font-weight="bold" font-family="Liberation Sans,sans-serif" fill="#1c1030" stroke="#1c1030" stroke-width=".35" text-anchor="middle">E</text><text x="480.1" y="647.2" font-size="10.6" font-weight="bold" font-family="Liberation Sans,sans-serif" fill="#1c1030" stroke="#1c1030" stroke-width=".35" text-anchor="middle">I</text><text x="638.3" y="647.2" font-size="10.6" font-weight="bold" font-family="Liberation Sans,sans-serif" fill="#1c1030" stroke="#1c1030" stroke-width=".35" text-anchor="middle">L</text><text x="275.3" y="672.8" font-size="10.6" font-weight="bold" font-family="Liberation Sans,sans-serif" fill="#2e8b35" stroke="#2e8b35" stroke-width=".35" text-anchor="start">+5°</text><text x="326.9" y="672.8" font-size="10.6" font-weight="bold" font-family="Liberation Sans,sans-serif" fill="#2e8b35" stroke="#2e8b35" stroke-width=".35" text-anchor="start">-1°</text><text x="476.9" y="672.8" font-size="10.6" font-weight="bold" font-family="Liberation Sans,sans-serif" fill="#2e8b35" stroke="#2e8b35" stroke-width=".35" text-anchor="start">-9°</text><rect x="174.1" y="671.6" width="9.4" height="19" rx="1" fill="#ffffb0" stroke="#bdbd2a" stroke-width="1"/><path d="M174.1 681.1H183.5" stroke="#bdbd2a" stroke-width="1"/><text x="178.8" y="679.6" font-size="8.6" font-family="Liberation Sans,sans-serif" fill="#a8a818" text-anchor="middle" stroke="#a8a818" stroke-width=".3">A</text><path d="M176.0 683.2L181.6 688.6M181.6 683.2L176.0 688.6" stroke="#bdbd2a" stroke-width="1.3"/><rect x="743.3" y="671.6" width="9.4" height="19" rx="1" fill="#ffffb0" stroke="#bdbd2a" stroke-width="1"/><path d="M743.3 681.1H752.7" stroke="#bdbd2a" stroke-width="1"/><path d="M745.2 673.6L750.8 679.0M750.8 673.6L745.2 679.0" stroke="#bdbd2a" stroke-width="1.3"/><text x="748.0" y="689.2" font-size="8.6" font-family="Liberation Sans,sans-serif" fill="#a8a818" text-anchor="middle" stroke="#a8a818" stroke-width=".3">B</text><text x="143.4" y="313.8" font-size="13.4" font-weight="bold" font-family="Liberation Sans,sans-serif" fill="#1aa88e" stroke="#1aa88e" stroke-width=".5" textLength="5" lengthAdjust="spacingAndGlyphs">1</text><path d="M150 309.4L152.8 305.8L156 309.4L152.8 313Z" fill="#1aa88e"/><text x="141" y="591.6" font-size="13.4" font-weight="bold" font-family="Liberation Sans,sans-serif" fill="#b07c4a" stroke="#b07c4a" stroke-width=".5" textLength="6.2" lengthAdjust="spacingAndGlyphs">2</text><path d="M148.4 587L151 583.6L154 587L151 590.4Z" fill="#b07c4a"/></svg><div class="abs" id="vline"></div><div class="abs" id="hline"></div><div class="abs" id="hline2"></div><div class="abs" id="scroll"></div><div class="abs" id="sthumb"></div><div class="tri abs" style="left:143.8px;top:695.5px;border-style:solid;border-width:2.6px 3.2px 2.6px 0;border-color:transparent #3c3f46 transparent transparent"></div><div class="tri abs" style="left:1004.6px;top:694.8px;border-style:solid;border-width:3px 0 3px 3.6px;border-color:transparent transparent transparent #3c3f46"></div><div class="abs" id="bottom"></div><div class="abs" id="bstrip"></div><div class="abs" style="left:137.6px;top:706.2px;width:11.6px;height:10.8px;background:#d27a7e;border:1px solid #b04a50"><svg width="9.6" height="8.8" viewBox="0 0 9.6 8.8" style="position:absolute;left:0;top:0"><path d="M1.6 1.4L8 7.4M8 1.4L1.6 7.4" stroke="#fff" stroke-width="1.8"/></svg></div><div class="abs" style="left:137.6px;top:718.4px;width:11.4px;height:10px;background:#cddaee;border:1px solid #8a9cba;font-size:8.4px;line-height:8px;font-weight:bold;color:#5f7eae;text-align:center">?</div><div class="bl" style="right:786.1px;top:726.2px;font-size:9.6px;transform:scaleX(0.915);transform-origin:100% 50%;text-align:right">Px transd.chan:</div><div class="bl" style="right:786.4px;top:742.9px;font-size:9.6px;transform:scaleX(0.915);transform-origin:100% 50%;text-align:right">Transd. type:</div><div class="combo" style="left:234.3px;top:722.4px;width:26px;height:16.8px"></div><div class="combo" style="left:234.3px;top:741px;width:70.6px;height:16px"></div><div class="abs" style="left:238.6px;top:724.6px;font-size:11.4px;line-height:13px;color:#111">1</div><div class="abs" style="left:238.3px;top:742.6px;font-size:11.4px;line-height:13px;color:#111">Px</div><svg class="abs" style="left:251.8px;top:729.6px" width="6" height="3.4" viewBox="0 0 6 3.4"><path d="M0 0H6L3 3.4Z" fill="#111"/></svg><svg class="abs" style="left:296.2px;top:747.2px" width="6" height="3.4" viewBox="0 0 6 3.4"><path d="M0 0H6L3 3.4Z" fill="#111"/></svg><div class="vsep" style="left:310.4px;top:714.5px;height:49px"></div><div class="bl" style="left:313.8px;top:735.0px;font-size:9.2px;transform:scaleX(0.82);transform-origin:0 50%">RPM:</div><div class="gbox" style="left:333.4px;width:71px"></div><div class="big" style="left:350px">846</div><div class="bl" style="left:407.9px;top:729.0px;font-size:9.6px;transform:scaleX(0.89);transform-origin:0 50%">Phase:</div><div class="bl" style="right:586.0px;top:740.4px;font-size:9.6px;transform:scaleX(0.89);transform-origin:100% 50%;text-align:right">(A)</div><div class="gbox" style="left:435.2px;width:63.4px"></div><div class="big" style="left:455.4px">0°</div><div class="bl" style="left:501.8px;top:729.0px;font-size:9.6px;transform:scaleX(0.89);transform-origin:0 50%">Phase:</div><div class="bl" style="right:489.4px;top:740.4px;font-size:9.6px;transform:scaleX(0.89);transform-origin:100% 50%;text-align:right">(B-A)</div><div class="gbox" style="left:528.8px;width:75.6px"></div><div class="big" style="left:542px">720°</div><div class="btn" style="left:607.6px;width:25.4px"><svg width="24" height="22" viewBox="0 0 24 22" style="position:absolute;left:0;top:0"><path d="M3.2 2.4V15.6M21.2 2.4V15.6" stroke="#b9a98a" stroke-width="1"/><path d="M11.9 2.4V15.6" stroke="#222" stroke-width=".9"/><path d="M3.2 4.4H21.2" stroke="#222" stroke-width=".8"/><path d="M3.2 4.4L5.8 2.8V6ZM11.9 4.4L9.3 2.8V6ZM11.9 4.4L14.5 2.8V6ZM21.2 4.4L18.6 2.8V6Z" fill="#222"/><text x="1.8" y="20.2" font-size="5.6" font-weight="bold" font-family="Liberation Sans,sans-serif" fill="#111" textLength="20.4" lengthAdjust="spacingAndGlyphs">D 360 L</text></svg></div><div class="cb" style="top:719.7px"></div><div class="bl" style="left:651.0px;top:720.6px;font-size:9.3px;transform:scaleX(0.93);transform-origin:0 50%">VVT</div><div class="cb" style="top:735.8px"><svg width="8" height="8" viewBox="0 0 8 8" style="position:absolute;left:0;top:0"><path d="M1.4 3.6L3.2 6L6.4 1.4" stroke="#5d7196" stroke-width="1.1" fill="none"/></svg></div><div class="bl" style="left:651.0px;top:736.7px;font-size:9.3px;transform:scaleX(0.93);transform-origin:0 50%">Mask</div><div class="cb" style="top:752.0px"><svg width="8" height="8" viewBox="0 0 8 8" style="position:absolute;left:0;top:0"><path d="M1.4 3.6L3.2 6L6.4 1.4" stroke="#5d7196" stroke-width="1.1" fill="none"/></svg></div><div class="bl" style="left:651.0px;top:752.9px;font-size:9.3px;transform:scaleX(0.93);transform-origin:0 50%">D&lt;<span style="font-family:'DejaVu Sans',sans-serif;font-size:8px;letter-spacing:-1px">↔</span>&gt;L</div><div class="btn" style="left:675.6px;width:26.4px"><svg width="24" height="22" viewBox="0 0 24 22" style="position:absolute;left:0;top:0"><path d="M14 8.2L10.4 10.8L14 13.4" stroke="#444" stroke-width=".9" fill="none"/></svg></div><div class="btn" style="left:702px;width:26.6px"><svg width="24" height="22" viewBox="0 0 24 22" style="position:absolute;left:0;top:0"><path d="M10.8 8.2L14.4 10.8L10.8 13.4" stroke="#444" stroke-width=".9" fill="none"/></svg></div><div class="vsep" style="left:732.2px;top:715.5px;height:48.5px"></div><div class="btn" style="left:736.4px;width:26.2px"><svg width="24" height="22" viewBox="0 0 24 22" style="position:absolute;left:0;top:0"><path d="M10 18.4C9.6 16.6 8.4 15.2 7.2 13.4C6.4 12.2 5.4 11.2 6 10.4C6.8 9.6 7.8 10.6 8.6 11.6L9.2 12.4L8.5 7C8.4 5.8 9.6 5.2 10.2 6.2L11 10L11 5.6C11 4 12.8 3.8 13.2 5.4L13.5 10L14.2 6.2C14.6 4.8 16.2 5.2 16.1 6.6L15.8 10.6L16.8 8.2C17.4 7 18.8 7.6 18.5 9L17.8 13.2C17.4 15 16.4 16.4 16.2 18.4Z" fill="#fdfdfd" stroke="#2a2a2a" stroke-width=".9" stroke-linejoin="round"/></svg></div><div class="abs" id="botbar"></div></body></html>
